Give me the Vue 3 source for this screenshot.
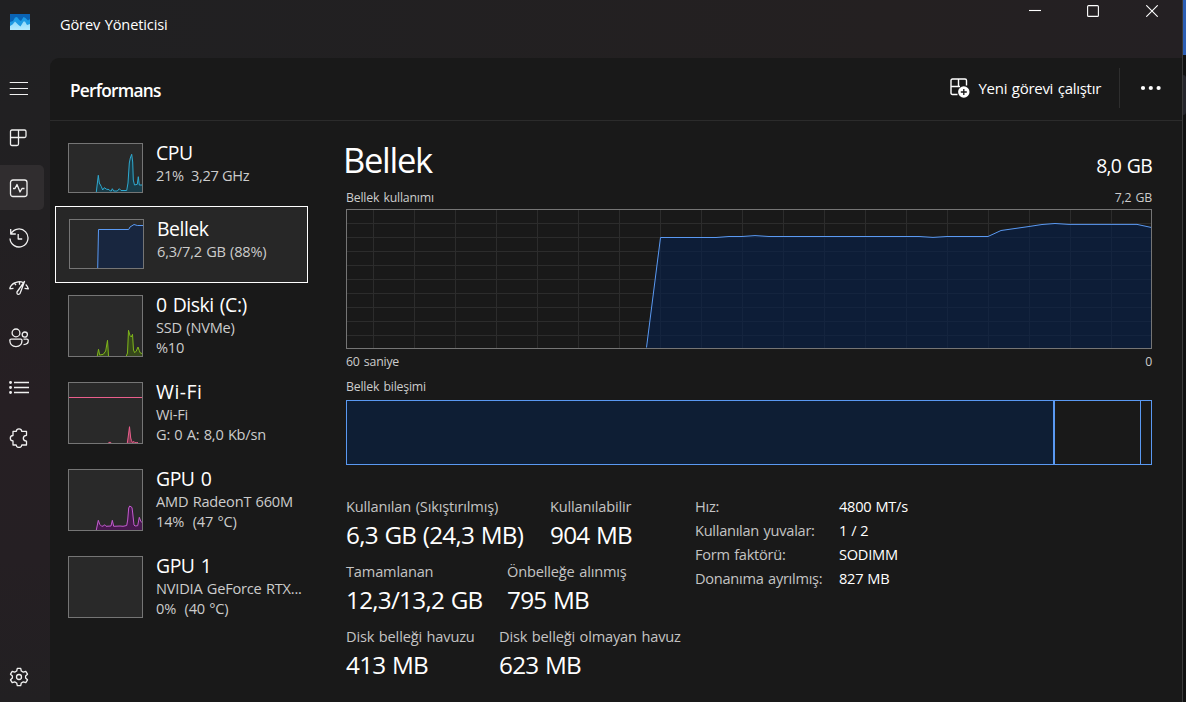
<script setup>
const devices = [
  {
    id: 'cpu', name: 'CPU', lines: ['21%  3,27 GHz'], h: 50, color: '#2fa9cf', fill: '#193c48',
    series: ['28.3,49 30.3,32.3 31.3,40 33.3,43.5 34.7,47 36.3,44.7 38.7,46.3 41,46.5 42.3,48 43.3,48 44.3,45.7 45.7,48 49.3,48 51.3,45.7 53,47.5 58.7,47.5 60,40 61.3,20 62.3,15 63.7,11.3 64.7,19 65.3,37 66.5,42 69.3,41.3 70.3,33.7 71.3,42 74,42'],
  },
  {
    id: 'mem', name: 'Bellek', lines: ['6,3/7,2 GB (88%)'], h: 50, color: '#5a99f2', fill: '#18263f', selected: true,
    series: ['28.7,49 29.5,10.5 59.7,10.5 61,8 65,5.5 68.3,6.5 74,6.5'],
  },
  {
    id: 'disk', name: '0 Diski (C:)', lines: ['SSD (NVMe)', '%10'], h: 62, color: '#7fb61b', fill: '#36481a',
    series: [
      '29.3,61 30.5,54.3 31.7,60 35.3,59.3 37.7,56 39.5,45.3 40.5,61',
      '58.3,61 59.5,58 60.5,35.3 62,40.5 63.3,42 64.5,39.3 65.5,55 66.7,57.7 68.3,56 70,52 71.3,55.7 72.3,58 74,58.5',
    ],
  },
  {
    id: 'wifi', name: 'Wi-Fi', lines: ['Wi-Fi', 'G: 0 A: 8,0 Kb/sn'], h: 62, color: '#ea5f8c', fill: '#7c3850', limit: true,
    series: ['40.3,61 41,60.4 42.7,60.4 43,61', '59.3,61 60.3,54 61.5,44.7 62.7,56 63.5,58.7 64.5,60.5 66,59.5 67,60.7 68.5,60.5 70,60.7'],
  },
  {
    id: 'gpu0', name: 'GPU 0', lines: ['AMD RadeonT 660M', '14%  (47 °C)'], h: 62, color: '#c45bd0', fill: '#46184d',
    series: ['28.3,61 30.3,51.3 31.7,55.3 33.7,57.3 35.5,57 36.5,55.7 38,57.3 43,57 44.3,51.3 45.7,57.3 52,57 55,57.3 58.7,56.5 59.7,51 60.7,39 61.7,37 64,38.5 64.7,44 66,56 67,57 69.7,56.7 71.3,48.3 72.7,52 74,53.7'],
  },
  { id: 'gpu1', name: 'GPU 1', lines: ['NVIDIA GeForce RTX...', '0%  (40 °C)'], h: 62, color: '#c45bd0', fill: '#46184d', series: [] },
]

const close = (pts, h) => {
  const list = pts.split(' ')
  const x0 = list[0].split(',')[0]
  const x1 = list[list.length - 1].split(',')[0]
  return `${x0},${h - 1} ${pts} ${x1},${h - 1}`
}

const memory = '300.5,138.5 314.5,28.5 370,28.5 383,27.5 396,27.5 409,26.6 423,27.5 573,27.5 587,28.4 601,27.5 642,27.5 655,21.5 669,19.5 683,17.5 696,15.5 709,14.5 723,15.4 791,15.4 805.5,18.5'

const stats = [
  { id: 'used', a: ['Kullanılan (Sıkıştırılmış)', '6,3 GB (24,3 MB)'], b: ['Kullanılabilir', '904 MB'] },
  { id: 'commit', a: ['Tamamlanan', '12,3/13,2 GB'], b: ['Önbelleğe alınmış', '795 MB'] },
  { id: 'pool', a: ['Disk belleği havuzu', '413 MB'], b: ['Disk belleği olmayan havuz', '623 MB'] },
]
const facts = [
  ['Hız:', '4800 MT/s'],
  ['Kullanılan yuvalar:', '1 / 2'],
  ['Form faktörü:', 'SODIMM'],
  ['Donanıma ayrılmış:', '827 MB'],
]
</script>

<template>
  <div class="screen">
    <div class="window">
      <header class="titlebar">
        <svg class="logo" width="20" height="16" viewBox="0 0 20 16">
          <defs>
            <linearGradient id="lg" x1="0" y1="0" x2="0" y2="1"><stop offset="0" stop-color="#8ed8fa" /><stop offset="1" stop-color="#b4ebff" /></linearGradient>
          </defs>
          <rect width="20" height="16" fill="#0a63b4" />
          <path d="M0 8L3 7L5 3.500L7 3L9.500 6L11 7L13.500 3L15.500 4L18 6.500L20 5V16H0Z" fill="#1d9ae3" />
          <path d="M0 12L2.500 10.500L5 7.500L8.500 11L10.500 12.500L13.500 7.500L15 7.500L17 11L20 10V16H0Z" fill="url(#lg)" />
        </svg>
        <span class="app-name">Görev Yöneticisi</span>
        <div class="controls">
          <svg width="12" height="12" viewBox="0 0 12 12"><path d="M0 5.500H12" /></svg>
          <svg width="12" height="12" viewBox="0 0 12 12"><rect x=".6" y=".6" width="10.800" height="10.800" rx="1" /></svg>
          <svg width="12" height="12" viewBox="0 0 12 12"><path d="M.3 .3L11.700 11.700M11.700 .3L.3 11.700" /></svg>
        </div>
      </header>

      <div class="body">
        <nav class="rail">
          <button class="nav">
            <svg width="20" height="20" viewBox="0 0 20 20"><path class="thin" d="M.7 4.500H19M.7 10.500H19M.7 16.500H19" /></svg>
          </button>
          <button class="nav">
            <svg width="20" height="20" viewBox="0 0 20 20"><path d="M3 2H15.500Q17 2 17 3.500V8Q17 9.500 15.500 9.500H9.500V16Q9.500 17.500 8 17.500H3Q1.500 17.500 1.500 16V3.500Q1.500 2 3 2ZM9.500 2V9.500H1.500" /></svg>
          </button>
          <button class="nav active">
            <svg width="20" height="20" viewBox="0 0 20 20"><rect x="1.500" y="2" width="16.500" height="16.500" rx="2.500" /><path d="M4 10.500H6L8 6.500L11 14L13 10.500H15.500" /></svg>
          </button>
          <button class="nav">
            <svg width="20" height="20" viewBox="0 0 20 20"><path d="M1.700 1V6H6.800M2 5.800A9 9 0 1 1 1 10.500M9.200 6V11H13.200" /></svg>
          </button>
          <button class="nav">
            <svg width="20" height="20" viewBox="0 0 20 20"><path d="M.6 10.800Q2 6.500 5.500 4.800L9 3.800Q12 3.400 14 4.500M.6 10.800L4.500 10.300M5.300 5L7 7.200M10.500 3.800V6.800M15.500 3.500L8 14Q7.700 16.500 9.700 16.300Q11.300 16 11.600 14L15.500 3.500ZM16.700 6.500Q18.500 8 19.300 10.800L15.500 10.300" /></svg>
          </button>
          <button class="nav">
            <svg width="20" height="20" viewBox="0 0 20 20"><circle cx="7" cy="4.900" r="3.900" /><circle cx="15.800" cy="6.600" r="2.600" /><path d="M2.200 11.100H11.800Q13 11.100 13 12.300Q13 18.600 7 18.600T.8 12.300Q.8 11.100 2.200 11.100ZM14.500 11.100H17.800Q19.300 11.100 19.300 12.600Q19.300 16.600 14.500 16.600" /></svg>
          </button>
          <button class="nav">
            <svg width="20" height="20" viewBox="0 0 20 20"><path d="M5 4.500H20M5 9.500H20M5 14.500H20" /><path class="bullets" d="M1.500 4.500H1.600M1.500 9.500H1.600M1.500 14.500H1.600" /></svg>
          </button>
          <button class="nav">
            <svg width="20" height="20" viewBox="0 0 20 20"><path d="M4 3.400H7.200Q7.500 .8 10 .8T12.800 3.400H17.500V7.300Q14.300 7.600 14.300 10.200T17.500 13.200V17H12.800Q12.500 19.500 10 19.500T7.200 17H4V13Q1.300 12.700 1.300 10.200T4 7.500Z" /></svg>
          </button>
          <button class="nav settings">
            <svg width="20" height="20" viewBox="0 0 20 20"><circle cx="10" cy="10" r="2.500" /><path d="M8.300 1.400H11.700L12.300 4L14.300 5.100L16.800 4.300L18.500 7.200L16.600 9V11L18.500 12.800L16.800 15.700L14.300 14.900L12.300 16L11.700 18.600H8.300L7.700 16L5.700 14.900L3.200 15.700L1.500 12.800L3.400 11V9L1.500 7.200L3.200 4.300L5.700 5.100L7.700 4Z" /></svg>
          </button>
        </nav>

        <main class="panel">
          <div class="toolbar">
            <h1>Performans</h1>
            <button class="run">
              <svg width="20" height="20" viewBox="0 0 20 20">
                <path d="M7.500 16.500H2.500Q1 16.500 1 15V2.500Q1 1 2.500 1H15Q16.500 1 16.500 2.500V7.500M8.500 1V8.500M1 8.500H10" />
                <circle cx="13.800" cy="14" r="5.700" />
                <path class="plus" d="M13.800 11V17M10.800 14H16.800" />
              </svg>
              <span>Yeni görevi çalıştır</span>
            </button>
            <button class="more">
              <svg width="22" height="6" viewBox="0 0 22 6"><circle cx="3" cy="3" r="2.100" /><circle cx="10.800" cy="3" r="2.100" /><circle cx="18.600" cy="3" r="2.100" /></svg>
            </button>
          </div>

          <div class="content">
            <div class="devices">
              <div v-for="d in devices" :key="d.id" class="device" :class="[d.id, { selected: d.selected }]">
                <svg class="thumb" width="75" :height="d.h" :viewBox="`0 0 75 ${d.h}`">
                  <rect x=".5" y=".5" width="74" :height="d.h - 1" fill="#292929" />
                  <template v-for="s in d.series" :key="s">
                    <polygon :points="close(s, d.h)" :fill="d.fill" />
                    <polyline :points="s" fill="none" :stroke="d.color" />
                  </template>
                  <path v-if="d.limit" d="M1 15.500H74" :stroke="d.color" />
                  <rect class="frame" x=".5" y=".5" width="74" :height="d.h - 1" />
                </svg>
                <div class="info">
                  <div class="name">{{ d.name }}</div>
                  <div v-for="l in d.lines" :key="l" class="line">{{ l }}</div>
                </div>
              </div>
            </div>

            <section class="detail">
              <div class="heading">
                <h2>Bellek</h2>
                <span class="total">8,0 GB</span>
              </div>
              <div class="caption usage"><span>Bellek kullanımı</span><span>7,2 GB</span></div>
              <svg class="chart" width="806" height="140" viewBox="0 0 806 140">
                <path v-for="i in 19" :key="'v' + i" class="grid" :d="`M${27.5 + 41 * (i - 1)} 1V139`" />
                <path v-for="i in 9" :key="'h' + i" class="grid" :d="`M1 ${14.5 + 14 * (i - 1)}H805`" />
                <polygon :points="close(memory, 140)" fill="#06214a" fill-opacity=".62" />
                <polyline :points="memory" fill="none" stroke="#5a99f2" />
                <rect class="frame" x=".5" y=".5" width="805" height="139" />
              </svg>
              <div class="caption axis"><span>60 saniye</span><span>0</span></div>
              <div class="caption comp">Bellek bileşimi</div>
              <div class="composition">
                <div class="in-use"></div>
                <div class="standby"></div>
                <div class="free"></div>
              </div>
              <div class="numbers">
                <div class="stats">
                  <div v-for="s in stats" :key="s.id" class="stat-row">
                    <div :class="s.id"><div class="label">{{ s.a[0] }}</div><div class="value">{{ s.a[1] }}</div></div>
                    <div><div class="label">{{ s.b[0] }}</div><div class="value">{{ s.b[1] }}</div></div>
                  </div>
                </div>
                <div class="facts">
                  <template v-for="f in facts" :key="f[0]">
                    <span class="label">{{ f[0] }}</span><span class="fact">{{ f[1] }}</span>
                  </template>
                </div>
              </div>
            </section>
          </div>
        </main>
      </div>
    </div>
    <div class="behind"><div class="blue"></div><div class="knob"></div></div>
  </div>
</template>

<style>
body { background: #191919; overflow: hidden; }
</style>

<style scoped>
* { box-sizing: border-box; }
.screen {
  display: flex; width: 1186px; height: 702px; overflow: hidden;
  font-family: "Open Sans", "Noto Sans", sans-serif; color: #fff; background: #191919;
}
h1, h2 { margin: 0; }
button { border: 0; padding: 0; margin: 0; background: none; color: inherit; font-family: inherit; }
svg { display: block; flex: none; }
.window {
  width: 1183px; height: 702px; border-right: 1px solid #3b3b3b; display: flex; flex-direction: column;
  background: linear-gradient(180deg, #202022 0, #222022 220px, #261f23 400px, #251f23 560px, #222022 702px);
}
.titlebar { height: 58px; flex: none; display: flex; align-items: flex-start; background: linear-gradient(90deg, #202022, #242021 75%, #242023); }
.logo { margin: 14px 0 0 10px; }
.app-name { margin: 14px 0 0 30px; font-size: 14.600px; line-height: 20px; letter-spacing: -.15px; word-spacing: 1px; }
.controls { margin: 5px 24px 0 auto; display: flex; gap: 47px; }
.controls svg { fill: none; stroke: #fff; stroke-width: 1.100; }
.controls svg:first-child { margin-right: -1px; }
.body { display: flex; flex: 1; }
.rail { width: 50px; display: flex; flex-direction: column; padding-top: 7px; }
.nav { width: 44px; height: 45px; margin-bottom: 5px; padding-left: 9px; border-radius: 0 5px 5px 0; flex: none; }
.nav.active { background: #302d2f; }
.nav svg { fill: none; stroke: #f0f0f0; stroke-width: 1.300; stroke-linejoin: round; }
.nav .thin { stroke-width: 1.150; }
.nav .bullets { stroke-width: 2.800; stroke-linecap: round; }
.nav.settings { margin-top: auto; margin-bottom: 3px; }
.panel { flex: 1; background: #191919; border-top-left-radius: 9px; }
.toolbar { height: 63px; display: flex; align-items: flex-start; border-bottom: 1px solid #2b2b2b; padding-left: 20px; }
.toolbar h1 { font-size: 17.300px; line-height: 24px; font-weight: 600; letter-spacing: -.75px; margin-top: 21px; }
.run { margin: 20px 18px 0 auto; display: flex; gap: 9px; font-size: 15px; line-height: 20px; letter-spacing: -.28px; word-spacing: 1px; }
.run svg { fill: none; stroke: #fff; stroke-width: 1.400; }
.run circle { fill: #fff; stroke: none; }
.run .plus { stroke: #191919; stroke-width: 1.300; }
.more { width: 63px; height: 40px; margin-top: 10px; border-left: 1px solid #2e2e2e; padding-left: 20px; }
.more svg { fill: #fff; }
.content { display: flex; }
.devices { width: 258px; padding: 9px 0 0 5px; margin-right: 36px; }
.device { width: 253px; display: flex; padding: 13px 0 12px 13px; height: 87px; }
.device:first-child { height: 76px; }
.device.selected { height: 77px; margin-bottom: -1px; border: 1px solid #fff; background: #272727; padding: 12px 0 0 13px; }
.frame { fill: none; stroke: #757575; }
.grid { fill: none; stroke: #2c2c2c; }
.info { padding-left: 13px; margin-top: -3px; white-space: pre; }
.name { font-size: 19.400px; line-height: 26px; height: 25px; letter-spacing: -.45px; word-spacing: 1.500px; }
.wifi .name { letter-spacing: .5px; }
.line { font-size: 14.600px; line-height: 20px; color: #ccc; letter-spacing: -.2px; word-spacing: .7px; }
.cpu .line { letter-spacing: -.35px; word-spacing: .2px; }
.detail { width: 808px; padding-top: 20px; padding-left: 2px; }
.heading { display: flex; justify-content: space-between; height: 45px; margin-left: -3px; }
h2 { font-size: 34.500px; line-height: 38px; font-weight: 400; letter-spacing: -1.300px; }
.total { font-size: 19.400px; line-height: 26px; margin-top: 12px; letter-spacing: -.7px; word-spacing: 1.200px; }
.caption { font-size: 12.300px; line-height: 16px; color: #ccc; letter-spacing: -.2px; word-spacing: 1.200px; display: flex; justify-content: space-between; }
.usage { margin-top: 4px; height: 19px; }
.axis { margin-top: 5px; }
.comp { margin-top: 9px; height: 21px; }
.composition { display: flex; height: 65px; border: 1px solid #5a99f2; }
.in-use { width: 708px; background: #0e1e34; border-right: 2px solid #5a99f2; }
.standby { width: 86px; border-right: 1px solid #5a99f2; }
.numbers { display: flex; margin-top: 31px; }
.stats { width: 349px; }
.stat-row { display: flex; height: 65px; white-space: nowrap; }
.used { width: 204px; }
.commit { width: 161px; }
.pool { width: 153px; }
.label { font-size: 14.600px; line-height: 20px; color: #c4c4c4; letter-spacing: -.17px; word-spacing: 1px; }
.facts .label { letter-spacing: -.27px; }
.value { font-size: 24.300px; line-height: 34px; margin-top: 2px; letter-spacing: -.75px; word-spacing: 1px; }
.facts { display: grid; grid-template-columns: 144px auto; grid-auto-rows: 24px; height: 96px; white-space: nowrap; }
.fact { font-size: 14.600px; line-height: 20px; letter-spacing: -.25px; word-spacing: .5px; }
.behind { width: 3px; background: #111; }
.blue { height: 55px; background: #2d5fb5; }
.knob { height: 40px; margin-top: 20px; background: #25252b; border-radius: 0 3px 3px 0; }
</style>
